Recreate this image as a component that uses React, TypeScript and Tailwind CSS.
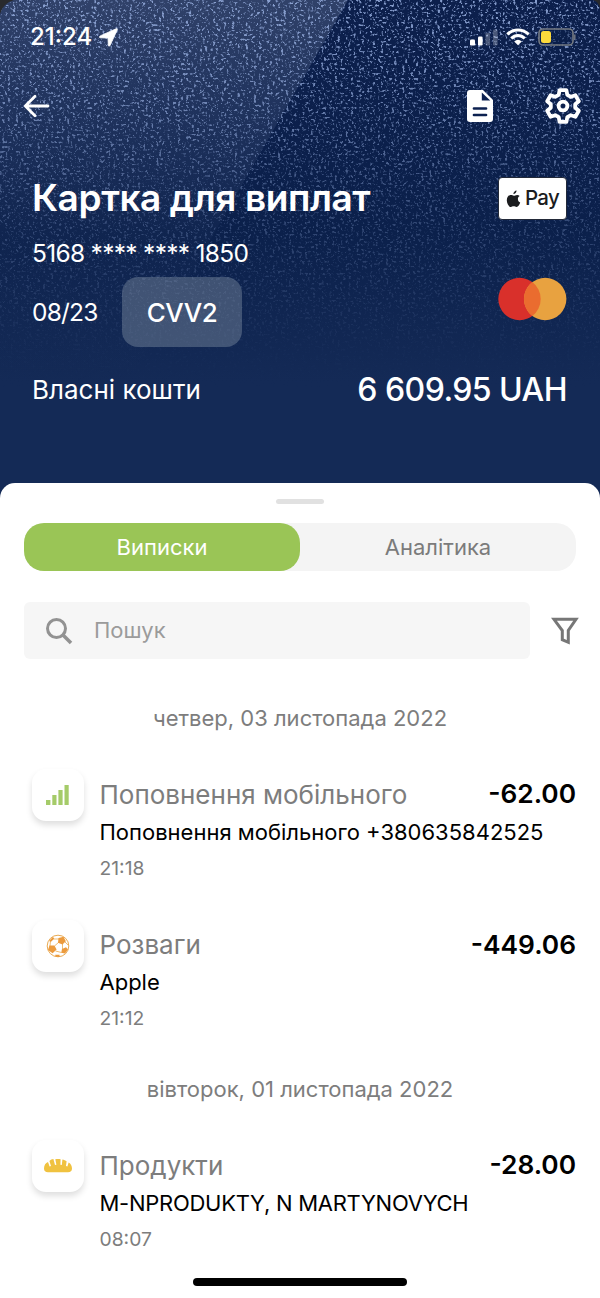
import React from "react";
import { clsx } from "clsx";

type Transaction = {
  icon: React.ReactNode;
  category: string;
  amount: string;
  details: string;
  time: string;
  tight?: boolean;
};

const SignalBars = () => (
  <svg width="24" height="22" viewBox="0 0 24 22" fill="#a5cb69">
    <rect x="0" y="16" width="4.4" height="5" />
    <rect x="6.3" y="11" width="4.2" height="10" />
    <rect x="12.4" y="6" width="4.2" height="15" />
    <rect x="18.5" y="1" width="4.2" height="20" />
  </svg>
);

const Ball = () => (
  <svg width="24" height="24" viewBox="0 0 24 24" fill="none" stroke="#efbd74" strokeWidth="1">
    <circle cx="12" cy="12" r="10.8" stroke="#e9aa52" />
    <path d="M13 8 8.5 12M16.5 10 16.5 15M9.5 17 15.5 18.5M7.5 5 13 5M19 8 22 11M4.5 7 4 12" />
    <g fill="#ec9a3c" stroke="none">
      <path d="M12.5 4 17.5 2.8 19.8 7.2 16.5 10.6 12 8.8Z" />
      <path d="M3.4 11.6 8.4 11.4 10.6 15.6 6.6 19.2 2 16Z" />
      <path d="M16 15 20 13.2 22 15.5 19 19.6 15.2 18.8Z" />
      <path d="M3 7 7 2.8 8.2 4.8 5 7.8Z" />
      <path d="M9.2 20.8 13.6 20.8 13.4 23 9.5 22.5Z" />
    </g>
  </svg>
);

const Bread = () => (
  <svg width="30" height="16" viewBox="0 0 30 16" fill="#f0c240">
    <path d="M1 10.5C1 7 2.6 5 5 4L6.6 8.4 8 8 6.4 2.9C7.6 1.9 8.8 1.3 10.4 1.1L12 7 13.4 6.8 12.3 1.3C14 .9 16 .9 17.6 1.3L17.4 6.8 18.8 7 19.4 1.4C21 1.7 22.6 2.3 23.6 3.2L23 8 24.4 8.4 25.6 4.4C27.8 5.6 29 7.8 29 10.5 29 13 27.5 14.3 25 14.3H5C2.5 14.3 1 13 1 10.5Z" />
  </svg>
);

const days: { date: string; items: Transaction[] }[] = [
  {
    date: "четвер, 03 листопада 2022",
    items: [
      {
        icon: <SignalBars />,
        category: "Поповнення мобільного",
        amount: "-62.00",
        details: "Поповнення мобільного +380635842525",
        time: "21:18",
      },
      {
        icon: <Ball />,
        category: "Розваги",
        amount: "-449.06",
        details: "Apple",
        time: "21:12",
      },
    ],
  },
  {
    date: "вівторок, 01 листопада 2022",
    items: [
      {
        icon: <Bread />,
        category: "Продукти",
        amount: "-28.00",
        details: "M-NPRODUKTY, N MARTYNOVYCH",
        time: "08:07",
        tight: true,
      },
    ],
  },
];

// Speckled dark-blue card surface that fades out towards the balance row
const CardTexture = () => (
  <svg className="absolute inset-0" width="600" height="510" viewBox="0 0 600 510">
    <defs>
      <filter id="speckle" x="0" y="0" width="100%" height="100%" colorInterpolationFilters="sRGB">
        <feTurbulence type="fractalNoise" baseFrequency="0.37 0.41" numOctaves="3" seed="23" />
        <feColorMatrix values="0 0 0 0 0.58  0 0 0 0 0.67  0 0 0 0 0.86  3 3 3 0 -4.75" />
      </filter>
      <linearGradient id="fade" x1="0" y1="0" x2="0" y2="1">
        <stop offset="0" stopColor="#fff" stopOpacity="0.9" />
        <stop offset="0.25" stopColor="#fff" stopOpacity="0.7" />
        <stop offset="0.5" stopColor="#fff" stopOpacity="0.36" />
        <stop offset="0.9" stopColor="#fff" stopOpacity="0.03" />
        <stop offset="1" stopColor="#fff" stopOpacity="0" />
      </linearGradient>
      <mask id="fadeMask">
        <rect width="600" height="390" fill="url(#fade)" />
      </mask>
      <linearGradient id="base" x1="0" y1="0" x2="0" y2="1">
        <stop offset="0" stopColor="#0c1f4c" />
        <stop offset="0.45" stopColor="#0b204b" />
        <stop offset="0.75" stopColor="#142a56" />
      </linearGradient>
      <linearGradient id="shine" x1="0" y1="0" x2="0" y2="1">
        <stop offset="0" stopColor="#8592ae" stopOpacity="0.3" />
        <stop offset="0.35" stopColor="#6f80a5" stopOpacity="0.17" />
        <stop offset="0.65" stopColor="#6f80a5" stopOpacity="0.03" />
        <stop offset="1" stopColor="#6f80a5" stopOpacity="0" />
      </linearGradient>
    </defs>
    <rect width="600" height="510" fill="url(#base)" />
    <path d="M0 0H348L130 380H0Z" fill="url(#shine)" />
    <g mask="url(#fadeMask)">
      <rect width="600" height="390" filter="url(#speckle)" />
    </g>
    <path d="M0 0H14Q3 3 0 14ZM600 0H593Q599 2 600 9Z" fill="#292a2d" />
  </svg>
);

const StatusBar = () => (
  <div className="flex h-[74px] items-center justify-between pl-[30px] pr-[24px]">
    <div className="flex items-center gap-[7px]">
      <span className="text-[24px] font-medium">21:24</span>
      <svg width="19" height="19" viewBox="0 0 19 19" fill="white" stroke="white" strokeWidth="0.8">
        <path d="M17 .8 1.2 7.9C.1 8.6.2 9.8 1.4 9.8L9 10 9.3 17.2C9.4 18.4 10.4 18.6 11 17.5L18.2 2C18.6 1 18 .4 17 .8Z" />
      </svg>
    </div>
    <div className="flex items-center">
      <svg width="28" height="17" viewBox="0 0 28 17" fill="white">
        <rect x="0" y="10.5" width="5" height="6" rx="1.2" />
        <rect x="8" y="7.5" width="4.6" height="9" rx="1.2" />
        <rect x="15.5" y="4" width="4.6" height="12.5" rx="1.2" opacity="0.25" />
        <rect x="23" y="0.5" width="4.6" height="16" rx="1.2" opacity="0.25" />
      </svg>
      <svg className="ml-2" width="24" height="18" viewBox="0 0 24 18" fill="none" stroke="white" strokeWidth="3">
        <path d="M1.3 6.4C7.3.4 16.7.4 22.7 6.4" />
        <path d="M5.2 10.4C9.2 6.5 14.8 6.5 18.8 10.4" />
        <path d="M8.2 13.4Q12 10 15.8 13.4L12 17.2Z" fill="white" stroke="none" />
      </svg>
      <svg className="ml-[8px]" width="38" height="18" viewBox="0 0 38 18" fill="none">
        <rect x="1" y="1" width="34" height="16" rx="4" fill="#0a1d47" fillOpacity="0.5" stroke="#767b83" strokeWidth="1.6" />
        <rect x="3" y="3" width="10" height="12" rx="2.5" fill="#fcd93c" />
        <path d="M36.8 6.5V11.5" stroke="#767b83" strokeWidth="1.4" />
      </svg>
    </div>
  </div>
);

const Toolbar = () => (
  <div className="flex h-[64px] items-center justify-between pl-[23px] pr-[19px]">
    <svg width="28" height="24" viewBox="0 0 28 24" fill="none" stroke="white" strokeWidth="2.8" strokeLinecap="round" strokeLinejoin="round">
      <path d="M25 12H2.5M12 2.3 2.3 12 12 21.7" />
    </svg>
    <div className="flex items-center gap-[51px]">
      <svg width="28" height="34" viewBox="0 0 28 34">
        <path d="M4 1H17L27 11V30Q27 33 24 33H4Q1 33 1 30V4Q1 1 4 1Z" fill="white" />
        <path d="M15.8 3.5V11.6H24.2Z" fill="#0c2150" />
        <path d="M8 19.5H20M8 26H20" stroke="#0c2150" strokeWidth="2.7" strokeLinecap="round" />
      </svg>
      <svg width="36" height="36" viewBox="0 0 36 36" fill="none" stroke="white" strokeWidth="3.8" strokeLinejoin="round">
        <path d="M14.6 2.2H21.4L22.3 6.8 25.8 8.8 30.4 7.3 33.8 13.2 30.2 16.2V19.8L33.8 22.8 30.4 28.7 25.8 27.2 22.3 29.2 21.4 33.8H14.6L13.7 29.2 10.2 27.2 5.6 28.7 2.2 22.8 5.8 19.8V16.2L2.2 13.2 5.6 7.3 10.2 8.8 13.7 6.8Z" />
        <circle cx="18" cy="18" r="4.4" />
      </svg>
    </div>
  </div>
);

const CardInfo = () => (
  <div className="pl-8 pr-[33px]">
    <div className="flex justify-between">
      <div>
        <h1 className="mt-[26px] flex h-[68px] items-center whitespace-nowrap text-[37px] font-semibold tracking-[-0.4px]">
          Картка для виплат
        </h1>
        <p className="flex h-[42px] items-center text-[24.5px] tracking-[-0.7px]">5168 **** **** 1850</p>
        <div className="mt-[3px] flex items-center">
          <span className="w-[90px] text-[24.5px] tracking-[-0.8px]">08/23</span>
          <button className="h-[70px] w-[120px] rounded-[16px] bg-[#8a98a9]/40 text-[26px] font-medium tracking-[-0.4px]">
            CVV2
          </button>
        </div>
      </div>
      <div className="flex flex-col items-end pt-[39px]">
        <div className="flex h-[43px] w-[69px] items-center justify-center gap-[4px] rounded-[4px] border border-[#222938] bg-white text-[#1b1c1e]">
          <svg width="15" height="18" viewBox="0 0 15 18" fill="currentColor">
            <path d="M10.6.4C10.7 2.4 9.1 4.1 7.4 4.1 7.2 2.3 8.8.6 10.6.4ZM13.7 6C12.5 6.8 11.9 7.7 11.9 9 11.9 10.7 12.8 11.9 14.2 12.5 13.6 14.4 12.2 17 10.5 17 9.4 17 9 16.3 7.7 16.3 6.3 16.3 5.9 17 4.9 17 2.9 17 .8 13.5.8 10.2.8 7 2.8 5 4.9 5 6.1 5 6.9 5.7 7.8 5.7 8.7 5.7 9.6 4.9 11.1 4.9 12.1 4.9 13 5.3 13.7 6Z" />
          </svg>
          <span className="text-[20.5px] font-medium leading-none tracking-[-0.7px]">Pay</span>
        </div>
        <svg className="mt-[57px]" width="70" height="44" viewBox="0 0 70 44">
          <circle cx="22.5" cy="22" r="21.2" fill="#d9302b" />
          <circle cx="48.2" cy="22" r="21.2" fill="#e8a240" />
          <path d="M35.3 5.1A21.2 21.2 0 0 1 35.3 38.9 21.2 21.2 0 0 1 35.3 5.1Z" fill="#ea6c2f" />
        </svg>
      </div>
    </div>
    <div className="mt-[13px] flex h-[58px] items-center justify-between">
      <span className="text-[26px]">Власні кошти</span>
      <span className="pt-px text-[32px] font-medium tracking-[-0.55px]">6 609.95 UAH</span>
    </div>
  </div>
);

const Tabs = () => (
  <div className="mx-6 mt-[19px] flex h-12 rounded-[20px] bg-[#f4f4f4] text-[22px]">
    <button className="flex-1 rounded-[20px] bg-[#9ac556] text-white">Виписки</button>
    <button className="flex-1 text-[#7b7b7b]">Аналітика</button>
  </div>
);

const Search = () => (
  <div className="mt-[31px] flex items-center pl-6 pr-[21px]">
    <div className="flex h-[57px] w-[506px] items-center rounded-md bg-[#f6f6f6] pl-[21px]">
      <svg width="28" height="28" viewBox="0 0 28 28" fill="none" stroke="#929292" strokeWidth="3">
        <circle cx="11.5" cy="11.5" r="9" />
        <path d="M18 18 26 26" strokeWidth="3.6" />
      </svg>
      <span className="ml-[21px] text-[22px] text-[#9b9b9b]">Пошук</span>
    </div>
    <svg className="ml-auto" width="28" height="28" viewBox="0 0 28 28" fill="none" stroke="#777" strokeWidth="3">
      <path d="M3 2.3H25L17.3 13.5V25.3L11.3 22.7V13.5Z" />
    </svg>
  </div>
);

const TransactionRow = ({ icon, category, amount, details, time, tight }: Transaction) => (
  <div className="flex h-[150.5px] pl-8 pr-6">
    <div className="mt-[14px] flex size-[52px] shrink-0 items-center justify-center rounded-[14px] bg-white shadow-[0_4px_6px_rgba(0,0,0,0.13)]">
      {icon}
    </div>
    <div className="ml-[15.5px] min-w-0 flex-1 whitespace-nowrap">
      <div className="mt-[19px] flex h-10 items-center justify-between">
        <span className="text-[26px] text-[#7d7d7d]">{category}</span>
        <span className="text-[26.3px] font-semibold text-black">{amount}</span>
      </div>
      <p className={clsx("flex h-9 items-center text-[22px] text-black", tight && "tracking-[-0.27px]")}>{details}</p>
      <p className="flex h-[35px] items-center pt-px text-[19.3px] text-[#7d7d7d]">{time}</p>
    </div>
  </div>
);

const App = () => {
  return (
    <main className="h-[1298px] w-[600px] overflow-hidden bg-white font-['Inter',sans-serif]">
      <header className="relative h-[500px] overflow-hidden text-white">
        <CardTexture />
        <div className="relative">
          <StatusBar />
          <Toolbar />
          <CardInfo />
        </div>
      </header>
      <section className="relative -mt-[17px] flex h-[815px] flex-col rounded-t-[15px] bg-white">
        <div className="mx-auto mt-4 h-[5px] w-12 shrink-0 rounded-full bg-[#e1e1e1]" />
        <Tabs />
        <Search />
        <div className="h-[600px] shrink-0 overflow-hidden pt-[38px]">
          {days.map((day) => (
            <div key={day.date} className="mb-3">
              <h2 className="flex h-[43px] items-center justify-center text-[22px] text-[#7d7d7d]">{day.date}</h2>
              <div className="mt-[15px]">
                {day.items.map((item) => (
                  <TransactionRow key={item.time} {...item} />
                ))}
              </div>
            </div>
          ))}
        </div>
        <div className="mx-auto mt-[19px] h-2 w-[214px] shrink-0 rounded-full bg-black" />
      </section>
    </main>
  );
};

export default App;
